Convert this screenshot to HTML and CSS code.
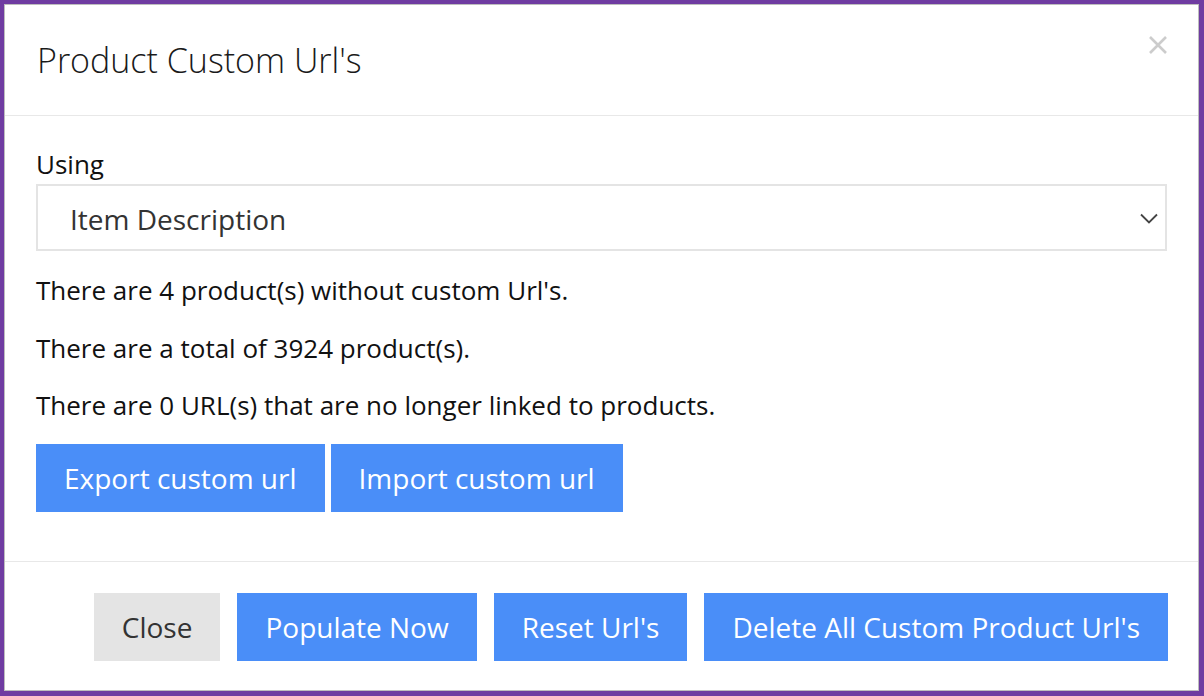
FILE: index.html
```html
<!DOCTYPE html>
<html lang="en">
<head>
    <meta charset="UTF-8">
    <meta name="viewport" content="width=device-width, initial-scale=1.0">
    <title>Product Custom Url's</title>
    <link rel="stylesheet" href="styles.css">
</head>
<body>
    <div class="modal">
        <div class="modal-header">
            <h4 class="modal-title">Product Custom Url's</h4>
            <button class="close" aria-label="Close">
                <svg width="18" height="18" viewBox="0 0 18 18">
                    <path d="M1 1 L17 17 M17 1 L1 17" stroke="#cccccc" stroke-width="2.6" fill="none"/>
                </svg>
            </button>
        </div>

        <div class="modal-body">
            <label class="field-label">Using</label>
            <div class="select">
                <span>Item Description</span>
                <svg class="chevron" width="18" height="11" viewBox="0 0 18 11">
                    <path d="M1 1.5 L9 9.5 L17 1.5" stroke="#444" stroke-width="1.8" fill="none"/>
                </svg>
            </div>

            <p>There are 4 product(s) without custom Url's.</p>
            <p>There are a total of 3924 product(s).</p>
            <p>There are 0 URL(s) that are no longer linked to products.</p>

            <div class="export-row">
                <button class="btn btn-blue">Export custom url</button>
                <button class="btn btn-blue">Import custom url</button>
            </div>
        </div>

        <div class="modal-footer">
            <button class="btn btn-grey">Close</button>
            <button class="btn btn-blue">Populate Now</button>
            <button class="btn btn-blue">Reset Url's</button>
            <button class="btn btn-blue">Delete All Custom Product Url's</button>
        </div>
    </div>
</body>
</html>
```

FILE: styles.css
```css
html, body {
    margin: 0;
    padding: 0;
    height: 100%;
}

body {
    background-color: #6f3ca1;
    padding: 4px 5px 5px 4px;
    box-sizing: border-box;
    font-family: 'Open Sans', sans-serif;
    color: #111;
}

.modal {
    height: 100%;
    box-sizing: border-box;
    background: #ffffff;
    border: 1px solid #bdbdbd;
    display: flex;
    flex-direction: column;
}

.modal-header {
    display: flex;
    justify-content: space-between;
    align-items: flex-start;
    padding: 35px 31px 35px 32px;
    border-bottom: 1px solid #e8e8e8;
}

.modal-title {
    margin: 0;
    font-size: 34px;
    font-weight: 300;
    line-height: 40px;
    color: #1a1a1a;
}

.close {
    background: none;
    border: none;
    padding: 0;
    margin-top: -4px;
    cursor: pointer;
    display: flex;
}

.modal-body {
    flex: 1;
    padding: 30px 31px 0 31px;
    font-size: 26px;
    line-height: 36px;
}

.field-label {
    display: block;
    margin-bottom: 2px;
}

.select {
    height: 67px;
    box-sizing: border-box;
    border: 2px solid #e4e4e4;
    display: flex;
    align-items: center;
    justify-content: space-between;
    padding: 3px 7px 0 32px;
    color: #333;
    font-size: 28px;
    margin-bottom: 21px;
}

.chevron {
    margin-top: -1px;
}

.modal-body p {
    margin: 0 0 21.5px 0;
}

.export-row {
    display: flex;
    gap: 6px;
    margin-top: -1px;
}

.btn {
    font-family: 'Open Sans', sans-serif;
    font-size: 28px;
    line-height: 36px;
    padding: 16px 28px;
    border: none;
    border-radius: 0;
    cursor: pointer;
}

.btn-blue {
    background-color: #4a8ef8;
    color: #ffffff;
}

.btn-grey {
    background-color: #e4e4e4;
    color: #333333;
}

.modal-footer {
    display: flex;
    justify-content: flex-end;
    gap: 17px;
    padding: 31px 30px 29px 31px;
    border-top: 1px solid #e8e8e8;
}
```
